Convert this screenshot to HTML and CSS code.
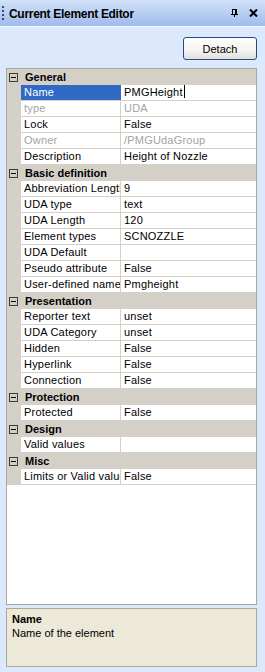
FILE: index.html
```html
<!DOCTYPE html>
<html lang="en">
   <head>
      <meta charset="UTF-8">
      <title>Current Element Editor</title>
      <link rel="stylesheet" href="styles.css">
   </head>
   <body>
      <div class="panel">
         <div class="titlebar">
            <span class="grip"></span>
            <span class="title">Current Element Editor</span>
            <span class="tb-icons">
               <svg class="pin" width="7" height="8" viewBox="0 0 7 8">
                  <path d="M1.5 0v5M4.5 0v5M5.5 0v5M1 0.5h5M0 5.5h7M3.5 5v3" stroke="#000" stroke-width="1" fill="none"/>
               </svg>
               <svg class="close" width="9" height="8" viewBox="0 0 9 8">
                  <path d="M1 0.5l7 7M8 0.5l-7 7" stroke="#000" stroke-width="2" fill="none"/>
               </svg>
            </span>
         </div>
         <div class="toolbar">
            <button class="btn" type="button">Detach</button>
         </div>
         <div class="grid">
            <div class="cat"><span class="toggle"></span><span class="cat-name">General</span></div>
            <div class="prop selected"><span class="pname">Name</span><span class="pval">PMGHeight<span class="caret"></span></span></div>
            <div class="prop readonly"><span class="pname">type</span><span class="pval">UDA</span></div>
            <div class="prop"><span class="pname">Lock</span><span class="pval">False</span></div>
            <div class="prop readonly"><span class="pname">Owner</span><span class="pval">/PMGUdaGroup</span></div>
            <div class="prop"><span class="pname">Description</span><span class="pval">Height of Nozzle</span></div>

            <div class="cat"><span class="toggle"></span><span class="cat-name">Basic definition</span></div>
            <div class="prop"><span class="pname">Abbreviation Length</span><span class="pval">9</span></div>
            <div class="prop"><span class="pname">UDA type</span><span class="pval">text</span></div>
            <div class="prop"><span class="pname">UDA Length</span><span class="pval">120</span></div>
            <div class="prop"><span class="pname">Element types</span><span class="pval">SCNOZZLE</span></div>
            <div class="prop"><span class="pname">UDA Default</span><span class="pval"></span></div>
            <div class="prop"><span class="pname">Pseudo attribute</span><span class="pval">False</span></div>
            <div class="prop"><span class="pname">User-defined name</span><span class="pval">Pmgheight</span></div>

            <div class="cat"><span class="toggle"></span><span class="cat-name">Presentation</span></div>
            <div class="prop"><span class="pname">Reporter text</span><span class="pval">unset</span></div>
            <div class="prop"><span class="pname">UDA Category</span><span class="pval">unset</span></div>
            <div class="prop"><span class="pname">Hidden</span><span class="pval">False</span></div>
            <div class="prop"><span class="pname">Hyperlink</span><span class="pval">False</span></div>
            <div class="prop"><span class="pname">Connection</span><span class="pval">False</span></div>

            <div class="cat"><span class="toggle"></span><span class="cat-name">Protection</span></div>
            <div class="prop"><span class="pname">Protected</span><span class="pval">False</span></div>

            <div class="cat"><span class="toggle"></span><span class="cat-name">Design</span></div>
            <div class="prop"><span class="pname">Valid values</span><span class="pval"></span></div>

            <div class="cat"><span class="toggle"></span><span class="cat-name">Misc</span></div>
            <div class="prop"><span class="pname">Limits or Valid values</span><span class="pval">False</span></div>
         </div>
         <div class="help">
            <div class="help-title">Name</div>
            <div>Name of the element</div>
         </div>
      </div>
   </body>
</html>
```

FILE: styles.css
```css
body { margin: 0; font-family: "Liberation Sans", Arial, sans-serif; font-size: 11px; color: #000; }
.panel { width: 265px; height: 672px; background: #dce8fc; display: flex; flex-direction: column; }

/* title bar */
.titlebar { height: 26px; border-bottom: 1px solid #f2f7fe; background: linear-gradient(#d3e2f9, #c3d6f5 30%, #9fbbea); display: flex; align-items: center; }
.grip { width: 2px; height: 14px; margin: 0 5px 0 2px; background: repeating-linear-gradient(#2c4a86 0 2px, transparent 2px 4px); }
.title { font-weight: bold; font-size: 12px; letter-spacing: -0.3px; flex: 1; margin-top: 1px; }
.tb-icons { display: flex; align-items: center; gap: 11px; margin-right: 7px; }
.tb-icons svg { display: block; }

/* toolbar */
.toolbar { display: flex; justify-content: flex-end; padding: 10px 8px 8px 0; }
.btn { width: 74px; height: 23px; padding: 0; margin: 0; border: 1px solid #1f4e86; border-radius: 3px; background: linear-gradient(#ffffff, #f4f3ef 60%, #e2e0d6); font-family: inherit; font-size: 11px; color: #000; }

/* property grid */
.grid { height: 535px; margin: 0 8px 0 6px; border: 1px solid #aca899; background: #fff; }
.cat { height: 16px; background: #d4d0c8; display: flex; align-items: center; }
.toggle { width: 9px; height: 9px; box-sizing: border-box; border: 1px solid #3c3c3c; margin: 0 7px 0 2px; position: relative; }
.toggle::after { content: ""; position: absolute; left: 1px; top: 3px; width: 5px; height: 1px; background: #000; }
.cat-name { font-weight: bold; }
.prop { height: 16px; box-sizing: border-box; border-bottom: 1px solid #d4d0c8; display: grid; grid-template-columns: 14px 100px 1fr; background: linear-gradient(90deg, #d4d0c8 14px, #fff 14px); line-height: 15px; letter-spacing: 0.2px; }
.pname { grid-column: 2; box-sizing: border-box; border-right: 1px solid #d4d0c8; padding-left: 3px; white-space: nowrap; overflow: hidden; }
.pval { padding-left: 3px; white-space: nowrap; overflow: hidden; }
.readonly { color: #a3a3a3; }
.selected .pname { background: #316ac5; color: #fff; border-right-color: #316ac5; }
.caret { display: inline-block; width: 1px; height: 13px; background: #000; vertical-align: -2px; margin-left: 1px; }

/* help pane */
.help { margin: 3px 8px 0 6px; border: 1px solid #aca899; background: #ece9d8; padding: 3px 5px 0; line-height: 14px; height: 54px; }
.help-title { font-weight: bold; }
```
